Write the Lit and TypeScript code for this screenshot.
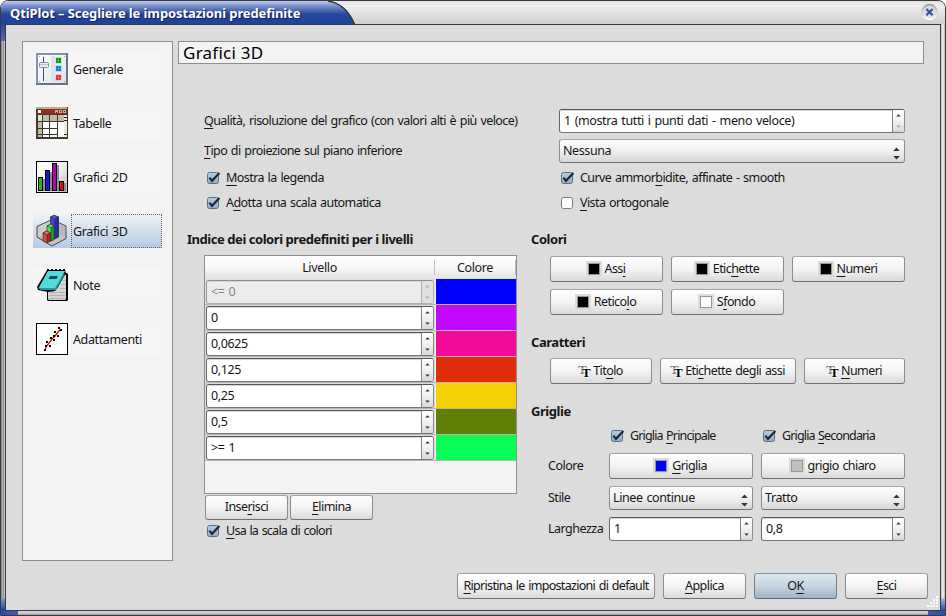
import { LitElement, html, css, svg } from "lit";
import { customElement, property } from "lit/decorators.js";
import { classMap } from "lit/directives/class-map.js";

/** Turns "&File" into text whose accelerator letter is underlined. */
const mnemonic = (text: string) => {
  const at = text.indexOf("&");
  if (at < 0) return html`${text}`;
  return html`${text.slice(0, at)}<u>${text[at + 1]}</u>${text.slice(at + 2)}`;
};

const base = css`
  * { box-sizing: border-box; }
  u { text-decoration: underline; text-decoration-thickness: 1px; text-underline-offset: 3px; text-decoration-skip-ink: none; }
`;

@customElement("push-button")
class PushButton extends LitElement {
  @property() label = "";
  @property() swatch = "";
  @property({ type: Boolean }) font = false;
  @property({ type: Boolean }) primary = false;
  static styles = [base, css`
    :host { display: block; height: 26px; }
    .btn {
      height: 100%; border: 1px solid; border-color: #a3a3a3 #8c8c8c #707070; border-radius: 3px;
      background: linear-gradient(#fefefe, #f4f4f4 50%, #dadada);
      display: flex; align-items: center; justify-content: center; white-space: pre; padding-bottom: 1px;
    }
    .primary { background: linear-gradient(#dde7ee, #c5d4df 50%, #9fb4c5); border-color: #7f8f9c #6f7f8c #5c6b77; }
    .icon { width: 16px; height: 16px; background: #dcdcdc; padding: 2px; margin: 0 3px 0 -2px; }
    .chip { display: block; width: 12px; height: 12px; border: 1px solid #979797; }
    svg { margin: 0 2px 0 -1px; }
    .t { font: bold 13px "Liberation Serif", serif; }
    .front { paint-order: stroke; stroke: #fff; stroke-width: 1.2px; }
  `];
  render() {
    return html`<div class=${classMap({ btn: true, primary: this.primary })}>
      ${this.swatch ? html`<span class="icon"><span class="chip" style="background:${this.swatch}"></span></span>` : ""}${this.font
        ? html`<svg width="13" height="16" viewBox="0 0 13 16"><text class="t" x="0" y="11" fill="#808080">T</text><text class="t front" x="4" y="14" fill="#000">T</text></svg>`
        : ""}<span>${mnemonic(this.label)}</span></div>`;
  }
}

@customElement("check-box")
class CheckBox extends LitElement {
  @property() label = "";
  @property({ type: Boolean }) checked = false;
  static styles = [base, css`
    :host { display: flex; align-items: center; height: 20px; white-space: pre; }
    svg { margin-right: 5px; flex: none; }
  `];
  render() {
    return html`<svg width="15" height="14" viewBox="0 0 15 14">
      <defs><linearGradient id="g" x2="0" y2="1"><stop stop-color="#b9cde2" /><stop offset="1" stop-color="#8fabc8" /></linearGradient></defs>
      <rect x="1.5" y="1.5" width="11" height="11" rx="2" fill=${this.checked ? "url(#g)" : "#fff"} stroke=${this.checked ? "#54728e" : "#7b7b7b"} />
      ${this.checked ? svg`<path d="M3.4 6.6 6 9.8 13.4 2" fill="none" stroke="#1e252c" stroke-width="2.1" />` : ""}
    </svg><span>${mnemonic(this.label)}</span>`;
  }
}

@customElement("spin-box")
class SpinBox extends LitElement {
  @property() value = "";
  @property({ type: Boolean }) disabled = false;
  @property({ type: Boolean }) floor = false;
  static styles = [base, css`
    :host { display: block; height: 24px; letter-spacing: -0.38px; }
    .box {
      height: 100%; display: flex; border: 1px solid; border-color: #555 #8a8a8a #777 #666; border-radius: 3px;
      background: #fff; overflow: hidden;
    }
    .val { flex: 1; padding: 0 0 2px 4px; display: flex; align-items: center; white-space: pre; border-top: 1px solid #d6d6d6; }
    .arrows {
      width: 12px; border-left: 1px solid #858585; background: linear-gradient(#fff, #f2f2f2 50%, #d8d8d8);
      display: flex; flex-direction: column; align-items: center; justify-content: space-between; padding: 4px 0;
    }
    .off { background: #ececec; border-color: #8d8d8d #b5b5b5 #adadad #999; color: #858585; }
    .off .arrows { background: #e0e0e0; border-color: #b0b0b0; }
    svg { display: block; }
  `];
  render() {
    const ink = this.disabled ? "#aaa" : "#333";
    return html`<div class=${classMap({ box: true, off: this.disabled })}>
      <div class="val">${this.value}</div>
      <div class="arrows">
        <svg width="5" height="3"><path d="M0.3 2.6h4.4L2.5 .2z" fill=${ink} /></svg>
        <svg width="5" height="3"><path d="M0.3 .4h4.4L2.5 2.8z" fill=${this.floor ? "#aaa" : ink} /></svg>
      </div></div>`;
  }
}

@customElement("combo-box")
class ComboBox extends LitElement {
  @property() value = "";
  static styles = [base, css`
    :host { display: block; height: 24px; letter-spacing: -0.4px; }
    .box {
      height: 100%; border: 1px solid; border-color: #a3a3a3 #8c8c8c #707070; border-radius: 3px;
      background: linear-gradient(#fefefe, #f0f0f0 50%, #d6d6d6);
      display: flex; align-items: center; justify-content: space-between; padding: 0 4px 1px 3px; white-space: pre;
    }
    svg { margin-top: 5px; }
  `];
  render() {
    return html`<div class="box"><span>${this.value}</span>
      <svg width="7" height="13"><path d="M.2 4h6.600L3.500 .5zM.2 9h6.600L3.500 12.500z" fill="#333" /></svg></div>`;
  }
}

const icons: Record<string, unknown> = {
  general: svg`
    <defs><linearGradient id="a" x2="1" y2="1"><stop stop-color="#fff" /><stop offset="1" stop-color="#dde1e8" /></linearGradient></defs>
    <rect width="32" height="32" fill="#8391ab" /><rect x="30" width="2" height="32" fill="#66728a" /><rect y="30" width="32" height="2" fill="#66728a" />
    <rect x="2" y="2" width="28" height="28" fill="url(#a)" />
    <rect x="15" y="3" width="4" height="26" fill="#dfe3e9" />
    <g fill="#9aa3b3"><rect x="3" y="3" width="1" height="1" /><rect x="28" y="3" width="1" height="1" /><rect x="3" y="28" width="1" height="1" /><rect x="28" y="28" width="1" height="1" /></g>
    <rect x="7" y="4" width="1" height="24" fill="#3e4758" />
    <rect x="3.5" y="9.5" width="9" height="5" rx="1" fill="#e6ebf2" stroke="#7d8ba3" />
    <rect x="4" y="11" width="8" height="1" fill="#b2c0d5" />
    <g stroke-opacity=".35"><rect x="20" y="5" width="5" height="5" fill="#17a014" stroke="#17a014" /><rect x="20" y="13" width="5" height="5" fill="#1b80dd" stroke="#1b80dd" /><rect x="20" y="22" width="5" height="5" fill="#e03a3c" stroke="#e03a3c" /></g>
    <rect x="22" y="7" width="1" height="1" fill="#b7f5a8" /><rect x="22" y="15" width="1" height="1" fill="#b9e2ff" /><rect x="22" y="24" width="1" height="1" fill="#ffc7c7" />`,
  table: svg`
    <rect width="32" height="32" fill="#3f3a32" /><rect width="31" height="2" fill="#b9ae94" />
    <rect x="1" y="2" width="30" height="5" fill="#982c1b" /><rect x="2" y="3" width="3" height="3" fill="#fff" /><rect x="2" y="2" width="3" height="1" fill="#17209e" />
    <g fill="#beb69f"><rect x="19" y="3" width="3" height="3" /><rect x="23" y="3" width="3" height="3" /><rect x="27" y="3" width="3" height="3" /></g>
    <g fill="#222"><rect x="20" y="5" width="1" height="1" /><rect x="24" y="4" width="1" height="1" /><rect x="28" y="4" width="1" height="1" /></g>
    <rect x="2" y="8" width="29" height="6" fill="#c2bba3" /><rect x="2" y="8" width="4" height="22" fill="#c2bba3" />
    <rect x="2" y="8" width="4" height="6" fill="#e8e4d5" />
    <rect x="6" y="15" width="25" height="15" fill="#fff" />
    <g fill="#3a352e"><rect x="6" y="8" width="1" height="22" /><rect x="13" y="8" width="1" height="22" /><rect x="21" y="8" width="1" height="22" />
      <rect x="2" y="14" width="20" height="1" /><rect x="2" y="21" width="20" height="1" /><rect x="2" y="27" width="20" height="1" /></g>
    <rect x="28" y="8" width="3" height="22" fill="#eeeadb" /><rect x="28" y="10" width="3" height="1" fill="#222" /><rect x="28" y="13" width="3" height="1" fill="#222" /><rect x="28" y="27" width="3" height="1" fill="#222" />`,
  bars: svg`
    <defs><linearGradient id="b" x2="1" y2="1"><stop stop-color="#fff" /><stop offset=".4" stop-color="#f7f7f7" /><stop offset="1" stop-color="#bdbdbd" /></linearGradient></defs>
    <rect x=".5" y=".5" width="31" height="31" fill="url(#b)" stroke="#000" />
    <g fill="#8c8c8c"><rect x="7" y="18" width="2" height="12" /><rect x="14" y="11" width="2" height="19" /><rect x="21" y="4" width="2" height="26" /><rect x="28" y="22" width="2" height="8" /></g>
    <g stroke="#000"><rect x="2.5" y="16.5" width="4" height="13" fill="#18bb24" /><rect x="9.5" y="9.5" width="4" height="20" fill="#1616d8" /><rect x="16.5" y="2.5" width="4" height="27" fill="#b800b4" /><rect x="23.5" y="20.5" width="4" height="9" fill="#d80d0d" /></g>`,
  plot3d: svg`
    <path d="M1.500 12v10L16 16V5z" fill="#cdcdcd" /><path d="M16 5 29.500 11.500V23L16 16z" fill="#b9b9b9" /><path d="M1.500 22 16 16l13.500 7L16 30.500z" fill="#c2c2c2" />
    <path d="M1 11.500 16 4.500 30 11M1 11.500V22l15 9 14-7.500V11" fill="none" stroke="#444" />
    <g stroke="#333" stroke-width=".7">
      <path d="M14.500 2 18 .4 22.500 2V22L18 24 14.500 22z" fill="#3a40e8" /><path d="M19 3.500 22.500 2V22L19 23.500z" fill="#242bb0" /><path d="M14.500 2 18 .4 22.500 2 19 3.600z" fill="#5a5ff5" />
      <path d="M11 11 14.500 9.300 18 11V24.500L14.500 26 11 24.500z" fill="#4cea50" /><path d="M15 12.500 18 11V24.500L15 26z" fill="#1ea629" /><path d="M11 11 14.500 9.300 18 11 15 12.500z" fill="#7bf57b" />
      <path d="M7 18 10.500 16 14.500 18V26L10.500 28 7 26z" fill="#ea4343" /><path d="M11 19.700 14.500 18V26L11 27.500z" fill="#b82222" /><path d="M7 18 10.500 16 14.500 18 11 19.700z" fill="#f46a6a" />
    </g>`,
  note: svg`
    <path d="M11 4h20l1 1v26l-1 1H12l-1-1z" fill="#000" /><path d="M12 6h18v24l-1 1H13l-1-1z" fill="#d5d5d5" />
    <g fill="#b1b1b1"><rect x="14" y="23" width="7" height="1" /><rect x="22" y="23" width="7" height="1" /><rect x="14" y="26" width="15" height="1" /><rect x="14" y="29" width="15" height="1" /><rect x="27" y="11" width="3" height="1" /><rect x="25" y="15" width="5" height="1" /><rect x="24" y="19" width="6" height="1" /></g>
    <path d="M11 1h18l1 3-8 14-3 4-7 1-10-2-1-3z" fill="#000" />
    <path d="M12 2h17l-9 17H2.500z" fill="#55dada" /><path d="M2 19h17l9.500-15v2l-9 15H5z" fill="#209d9f" />
    <path d="M14 7h8l-1.500 3h-8z" fill="#104d50" />
    <g fill="#000"><rect x="11" y="0" width="2" height="2" /><rect x="15" y="0" width="2" height="2" /><rect x="19" y="0" width="2" height="2" /><rect x="23" y="0" width="2" height="2" /><rect x="27" y="0" width="2" height="2" /></g>`,
  fit: svg`
    <rect x=".5" y=".5" width="31" height="31" fill="#fff" stroke="#000" />
    <path d="M9 27 10 24 13 20 16 16 19 13 22 9 25 6" fill="none" stroke="#f00000" stroke-width="1.300" />
    <g fill="#000"><rect x="8" y="26" width="2" height="2" /><rect x="9" y="22" width="2" height="2" /><rect x="10" y="18" width="2" height="2" /><rect x="13" y="22" width="2" height="2" /><rect x="14" y="14" width="2" height="2" /><rect x="17" y="16" width="2" height="2" /><rect x="17" y="12" width="2" height="2" /><rect x="18" y="8" width="2" height="2" /><rect x="21" y="12" width="2" height="2" /><rect x="22" y="4" width="2" height="2" /><rect x="24" y="6" width="2" height="2" /></g>`,
};

const pages = [
  ["general", "Generale"], ["table", "Tabelle"], ["bars", "Grafici 2D"],
  ["plot3d", "Grafici 3D"], ["note", "Note"], ["fit", "Adattamenti"],
];

const levels = [
  ["<= 0", "#0000ff"], ["0", "#c209ff"], ["0,0625", "#f20a98"], ["0,125", "#df2c0a"],
  ["0,25", "#f4d206"], ["0,5", "#5f8006"], [">= 1", "#07ff56"],
];

@customElement("app-root")
class AppRoot extends LitElement {
  static styles = [base, css`
    :host { display: block; width: 946px; height: 616px; background: #fff; overflow: hidden; font: 12.5px/18px "Noto Sans", sans-serif; letter-spacing: -0.57px; word-spacing: 1px; color: #161616; }
    .window {
      width: 946px; height: 616px; display: grid; grid-template: 23px 1fr 4px / 4px 1fr 4px; border: 1px solid #3a3a3c;
      border-radius: 8px 8px 0 0; overflow: hidden; background: #d2d2d4;
    }
    .title { grid-column: 1 / -1; display: flex; justify-content: space-between; align-items: flex-start; background: linear-gradient(#e2e2e2, #f0f0f0 20%, #cfcfcf); }
    .tab { position: relative; width: 356px; height: 23px; margin-left: -1px; }
    .tab svg { display: block; height: 23px; }
    .tab span { position: absolute; left: 10px; top: 3px; font: bold 13px/18px "Noto Sans", sans-serif; letter-spacing: -0.1px; word-spacing: 0; color: #fff; text-shadow: 1px 1px 1px #10204f; white-space: pre; }
    .close { margin: 2px 7px 0 0; }
    .edge.l { background: linear-gradient(#24479a, #5069b0) 0 0 / 4px 17px no-repeat, linear-gradient(#7f9bd8, #1c3e98) 0 100% / 4px 13px no-repeat, linear-gradient(90deg, #77777a, #b5b5b8 40%, #8c8c8f 60%, #dedee0); }
    .edge.r { background: linear-gradient(#a8bfe8, #2446a0) 0 100% / 4px 13px no-repeat, linear-gradient(90deg, #c4c4c6, #f2f2f4 50%, #b5b5b8); }
    .foot { grid-column: 1 / -1; background: linear-gradient(90deg, #2c4ea6, #3f5cab) 0 0 / 17px 4px no-repeat, linear-gradient(90deg, #3f5cab, #2c4ea6) 100% 0 / 17px 4px no-repeat, linear-gradient(#dcdae0, #c5c3c9 60%, #9c9aa0); }
    .client {
      border: 1px solid #3a3a3c; background: #dcdcdc; display: grid; position: relative;
      grid-template: 532px 1fr / 151px 1fr; column-gap: 5px; padding: 16px 16px 0 16px;
    }
    .side { height: 520px; border: 1px solid #8e8e8e; background: #f3f3f3; padding: 10px 0 0 10px; display: flex; flex-direction: column; gap: 20px; letter-spacing: -0.38px; }
    .page { width: 129px; height: 34px; padding-left: 3px; display: flex; align-items: center; gap: 3px; background: #f5f5f5; }
    .page .name { height: 34px; line-height: 36px; flex: 1; padding-left: 2px; }
    .page.on { background: linear-gradient(#edf2f7, #d3dfec 50%, #b4cae1); }
    .page.on .name { outline: 1px dotted #666; outline-offset: -1px; }
    .main { display: flex; flex-direction: column; }
    .head { height: 23px; border: 1px solid #8e8e8e; background: #f3f3f3; padding-left: 4px; font-size: 17px; line-height: 21px; letter-spacing: 0.25px; word-spacing: 0; color: #000; width: 746px; }
    .opts { margin: 45px 0 0 26px; display: grid; grid-template: 24px 24px / 355px 346px; row-gap: 6px; align-items: center; white-space: pre; }
    .opts span { padding-bottom: 1px; }
    .checks { margin: 5px 0 0 28px; display: grid; grid-template: 20px 20px / 354px 1fr; row-gap: 5px; }
    .cols { display: grid; grid-template-columns: 345px 1fr; margin-top: 17px; }
    h3 { margin: 0; font: bold 13px/18px "Noto Sans", sans-serif; letter-spacing: -0.45px; word-spacing: 0; height: 18px; white-space: pre; }
    .left { padding-left: 9px; }
    .table { margin: 7px 0 0 17px; width: 313px; height: 239px; border: 1px solid #8e8e8e; background: #f3f3f3; }
    .thead { display: grid; grid-template-columns: 230px 81px; height: 23px; background: linear-gradient(#fff, #f8f8f8 50%, #e2e2e2); text-align: center; letter-spacing: -0.35px; }
    .thead span { border-right: 1px solid #bdbdbd; margin: 4px 0; line-height: 15px; }
    .row { display: grid; grid-template-columns: 230px 80px; column-gap: 1px; height: 26px; border-bottom: 1px solid #b6b6b6; }
    .cell { padding: 1px 1px 0 1px; background: #dcdcdc; }
    .pair { display: flex; }
    .left .pair { margin: 1px 0 0 18px; gap: 2px; }
    .left .pair push-button { width: 83px; height: 25px; }
    .left check-box { margin: 1px 0 0 19px; letter-spacing: -0.75px; }
    .right { padding-left: 8px; }
    .grid3 { margin: 8px 0 0 19px; display: grid; grid-template-columns: 113px 113px 113px; gap: 7px 8px; }
    .fonts { margin: 7px 0 0 19px; display: grid; grid-template-columns: 102px 136px 101px; gap: 8px; }
    .grids { margin: 6px 0 0 17px; display: grid; grid-template: 20px 26px 24px 24px / 53px 144px 144px; gap: 7px 8px; align-items: center; white-space: pre; }
    .grids span { padding-bottom: 1px; letter-spacing: -0.5px; }
    .grids check-box { padding-left: 1px; letter-spacing: -0.85px; }
    .group { margin-top: 18px; }
    .actions { grid-column: 1 / -1; display: flex; justify-content: flex-end; gap: 8px; margin-right: -4px; }
    .wide { width: 198px; letter-spacing: -0.69px; } .small { width: 83px; }
    .grip { position: absolute; right: 1px; bottom: 2px; }
  `];
  render() {
    return html`<div class="window">
      <div class="title">
        <div class="tab">
          <svg width="356" height="24"><defs><linearGradient id="t" x2="0" y2="1"><stop stop-color="#c0cdf0" /><stop offset=".2" stop-color="#7d93cc" /><stop offset=".55" stop-color="#23489c" /><stop offset="1" stop-color="#20429a" /></linearGradient></defs>
            <path d="M0 0H328C342 2 350 12 355 24H0z" fill="url(#t)" /><path d="M328 0C342 2 350 12 355 24" fill="none" stroke="#333" stroke-width="1.300" /></svg>
          <span>QtiPlot – Scegliere le impostazioni predefinite</span>
        </div>
        <svg class="close" width="17" height="18" viewBox="0 0 17 18"><defs><linearGradient id="c" x2="0" y2="1"><stop stop-color="#a5a5a5" /><stop offset="1" stop-color="#fff" /></linearGradient></defs>
          <circle cx="8.500" cy="9" r="7.200" fill="#dedede" stroke="url(#c)" stroke-width="2" /><path d="M5.400 6 11.600 12.200M11.600 6 5.400 12.200" stroke="#2d53a8" stroke-width="2.200" /></svg>
      </div>
      <div class="edge l"></div>
      <div class="client">
        <div class="side">
          ${pages.map(([icon, name]) => html`<div class=${classMap({ page: true, on: icon === "plot3d" })}>
            <svg width="32" height="32" viewBox="0 0 32 32">${icons[icon]}</svg><span class="name">${name}</span></div>`)}
        </div>
        <div class="main">
          <div class="head">Grafici 3D</div>
          <div class="opts">
            <span>${mnemonic("&Qualità, risoluzione del grafico (con valori alti è più veloce)")}</span>
            <spin-box floor value="1 (mostra tutti i punti dati - meno veloce)"></spin-box>
            <span>${mnemonic("&Tipo di proiezione sul piano inferiore")}</span>
            <combo-box value="Nessuna"></combo-box>
          </div>
          <div class="checks">
            <check-box checked label="&amp;Mostra la legenda"></check-box>
            <check-box checked label="Curve ammor&amp;bidite, affinate - smooth"></check-box>
            <check-box checked label="A&amp;dotta una scala automatica"></check-box>
            <check-box label="&amp;Vista ortogonale"></check-box>
          </div>
          <div class="cols">
            <div class="left">
              <h3>Indice dei colori predefiniti per i livelli</h3>
              <div class="table">
                <div class="thead"><span>Livello</span><span>Colore</span></div>
                ${levels.map(([value, color], i) => html`<div class="row">
                  <div class="cell"><spin-box ?disabled=${i === 0} value=${value}></spin-box></div>
                  <div style="background:${color}"></div></div>`)}
              </div>
              <div class="pair"><push-button label="Inse&amp;risci"></push-button><push-button label="&amp;Elimina"></push-button></div>
              <check-box checked label="&amp;Usa la scala di colori"></check-box>
            </div>
            <div class="right">
              <h3>Colori</h3>
              <div class="grid3">
                <push-button swatch="#000" label="Ass&amp;i"></push-button>
                <push-button swatch="#000" label="Etic&amp;hette"></push-button>
                <push-button swatch="#000" label="&amp;Numeri"></push-button>
                <push-button swatch="#000" label="Retico&amp;lo"></push-button>
                <push-button swatch="#fff" label="S&amp;fondo"></push-button>
              </div>
              <h3 class="group">Caratteri</h3>
              <div class="fonts">
                <push-button font label="Tit&amp;olo"></push-button>
                <push-button font label="Eti&amp;chette degli assi"></push-button>
                <push-button font label="&amp;Numeri"></push-button>
              </div>
              <h3 class="group">Griglie</h3>
              <div class="grids">
                <span></span><check-box checked label="Griglia &amp;Principale"></check-box><check-box checked label="Griglia &amp;Secondaria"></check-box>
                <span>Colore</span><push-button swatch="#0000ff" label="&amp;Griglia"></push-button><push-button swatch="#bfbfbf" label="grigio chiaro"></push-button>
                <span>Stile</span><combo-box value="Linee continue"></combo-box><combo-box value="Tratto"></combo-box>
                <span>Larghezza</span><spin-box value="1"></spin-box><spin-box value="0,8"></spin-box>
              </div>
            </div>
          </div>
        </div>
        <div class="actions">
          <push-button class="wide" label="&amp;Ripristina le impostazioni di default"></push-button>
          <push-button class="small" label="&amp;Applica"></push-button>
          <push-button class="small" primary label="O&amp;K"></push-button>
          <push-button class="small" label="&amp;Esci"></push-button>
        </div>
        <svg class="grip" width="12" height="12"><g fill="#fff"><rect x="9" y="0" width="2" height="2" /><rect x="6" y="3" width="2" height="2" /><rect x="9" y="3" width="2" height="2" /><rect x="3" y="6" width="2" height="2" /><rect x="6" y="6" width="2" height="2" /><rect x="9" y="6" width="2" height="2" /><rect x="0" y="9" width="2" height="2" /><rect x="3" y="9" width="2" height="2" /><rect x="6" y="9" width="2" height="2" /><rect x="9" y="9" width="2" height="2" /></g></svg>
      </div>
      <div class="edge r"></div>
      <div class="foot"></div>
    </div>`;
  }
}
